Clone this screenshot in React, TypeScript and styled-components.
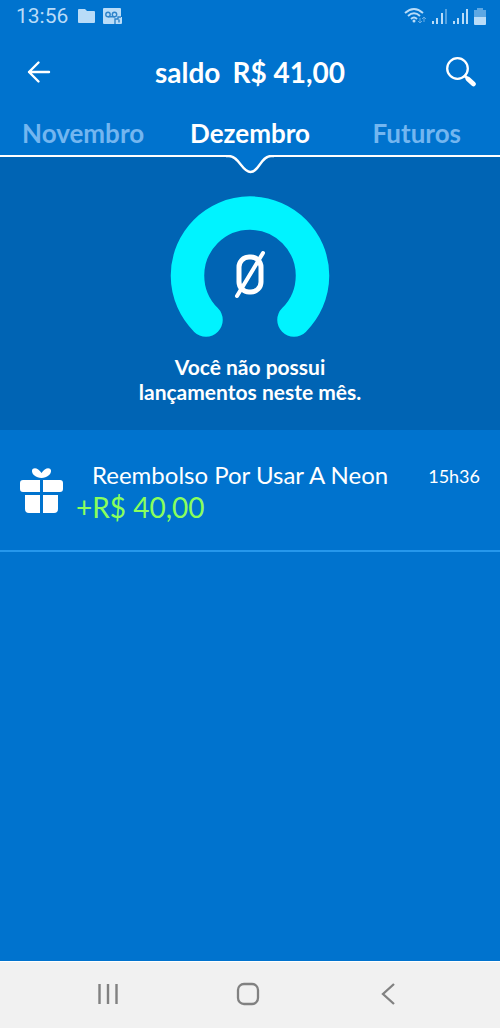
import React from "react";
import styled, { createGlobalStyle } from "styled-components";

const Global = createGlobalStyle`
  * { box-sizing: border-box; }
  html, body { margin: 0; background: #0073ce; }
  body { font-family: Lato, "Liberation Sans", sans-serif; color: #fff; }
  button { border: 0; padding: 0; background: none; color: inherit; font: inherit; cursor: pointer; }
  h1, h2, p { margin: 0; }
  svg { display: block; }
`;

const Screen = styled.div`
  display: flex;
  flex-direction: column;
  min-height: 100vh;
`;

const StatusBar = styled.div`
  display: flex;
  align-items: center;
  justify-content: space-between;
  height: 32px;
  padding: 0 14px 0 16px;
  color: #b9dcf8;
  font: 21px/32px Roboto, sans-serif;
`;

const StatusGroup = styled.div<{ $gap: number }>`
  display: flex;
  align-items: center;
  gap: ${(p) => p.$gap}px;
`;

const Header = styled.header`
  display: grid;
  grid-template-columns: 40px 1fr 40px;
  align-items: center;
  height: 80px;
  padding: 0 19px;
`;

const IconButton = styled.button`
  display: flex;
  align-items: center;
  justify-content: center;
  width: 40px;
  height: 40px;
`;

const Balance = styled.h1`
  display: flex;
  justify-content: center;
  gap: 12px;
  font-size: 28px;
  line-height: 32px;
  font-weight: 700;
`;

const Months = styled.nav`
  display: grid;
  grid-template-columns: 1fr auto 1fr;
  height: 43px;
  padding-top: 5px;
`;

const Month = styled.button<{ $side?: "left" | "right" }>`
  && {
    height: 32px;
    padding-left: ${(p) => (p.$side === "left" ? 22 : 0)}px;
    padding-right: ${(p) => (p.$side === "right" ? 39 : 0)}px;
    text-align: ${(p) => p.$side ?? "center"};
    font-size: 26px;
    line-height: 32px;
    font-weight: 700;
    color: ${(p) => (p.$side ? "#73b6f0" : "#fff")};
  }
`;

const Summary = styled.section`
  display: flex;
  flex-direction: column;
  align-items: center;
  padding-bottom: 26px;
  background: #0064b4;
`;

const Divider = styled.div`
  display: flex;
  width: 100%;
  height: 20px;
  margin-bottom: 21px;
`;

const DividerLine = styled.div`
  flex: 1;
  height: 2px;
  background: #fff;
`;

const Message = styled.p`
  margin-top: 14px;
  font-size: 21px;
  line-height: 25px;
  font-weight: 700;
  text-align: center;
`;

const Entry = styled.article`
  display: flex;
  align-items: flex-start;
  height: 122px;
  padding: 30px 20px 0;
  border-bottom: 2px solid #2597ec;
`;

const GiftSlot = styled.div`
  padding-top: 7px;
`;

const EntryText = styled.div`
  flex: 1;
  padding-left: 13px;
`;

const EntryTitle = styled.h2`
  padding-left: 16px;
  font-size: 24px;
  line-height: 30px;
  font-weight: 400;
`;

const Amount = styled.p`
  font-size: 28px;
  line-height: 34px;
  color: #8aff5c;
`;

const Time = styled.time`
  font-size: 18px;
  line-height: 32px;
`;

const NavBar = styled.nav`
  display: flex;
  align-items: flex-start;
  justify-content: center;
  gap: 100px;
  height: 67px;
  margin-top: auto;
  padding: 12px 4px 0 0;
  border-top: 1px solid #fff;
  background: #f1f1f1;
  color: #818181;
`;

const Signal = ({ weak }: { weak?: boolean }) => (
  <svg width="16" height="16" viewBox="0 0 16 16" fill="currentColor" aria-hidden="true">
    <rect x="0" y="13" width="2" height="3" />
    <rect x="4" y="10" width="2" height="6" />
    <rect x="9" y="5" width="2" height="11" />
    <rect x="13" y="1" width="2" height="15" opacity={weak ? 0.45 : 1} />
  </svg>
);

export default function App() {
  return (
    <Screen>
      <Global />
      <StatusBar>
        <StatusGroup $gap={9}>
          <span>13:56</span>
          <svg width="46" height="18" viewBox="0 0 46 18" aria-hidden="true">
            <path d="M2 2h6l2 2h7q1 0 1 1v10q0 1-1 1H2q-1 0-1-1V3q0-1 1-1z" fill="currentColor" />
            <path d="M27 1h16q1 0 1 1v8h1v6q0 1-1 1H27q-1 0-1-1V2q0-1 1-1z" fill="currentColor" />
            <g fill="none" stroke="#2e83ca" strokeWidth="1.4">
              <circle cx="31" cy="7.500" r="2.200" />
              <circle cx="37.500" cy="7.500" r="2.200" />
              <path d="M31 9.700h7M38 17v-5h3v-2h3" />
              <path d="M42 12.500v3" />
            </g>
          </svg>
        </StatusGroup>
        <StatusGroup $gap={5}>
          <svg width="23" height="18" viewBox="0 0 23 18" aria-hidden="true">
            <g fill="none" stroke="currentColor" strokeWidth="1.900">
              <path d="M1 6Q10-2 19 6M4 9Q10 3.500 16 9M7 12Q10 9 13 12" />
            </g>
            <circle cx="10" cy="14" r="1.500" fill="currentColor" />
            <path d="M16 11v4m-2-1 2 2 2-2M20 15v-4m-2 1 2-2 2 2" fill="none" stroke="currentColor" opacity=".55" />
          </svg>
          <Signal weak />
          <Signal />
          <svg width="12" height="17" viewBox="0 0 12 17" fill="currentColor" aria-hidden="true">
            <path d="M3 0h6v2h3v7H0V2h3z" opacity=".5" />
            <path d="M0 9h12v7q0 1-1 1H1q-1 0-1-1z" />
          </svg>
        </StatusGroup>
      </StatusBar>

      <Header>
        <IconButton aria-label="Voltar">
          <svg width="24" height="24" viewBox="0 0 24 24" fill="none" stroke="#fff" strokeWidth="2.4" strokeLinecap="round" strokeLinejoin="round">
            <path d="M22 12H2M11.500 2.500 2 12l9.500 9.500" />
          </svg>
        </IconButton>
        <Balance>
          <span>saldo</span>
          <span>R$ 41,00</span>
        </Balance>
        <IconButton aria-label="Buscar">
          <svg width="32" height="32" viewBox="0 0 32 32" fill="none" stroke="#fff" strokeLinecap="round">
            <circle cx="12.500" cy="12.500" r="10.300" strokeWidth="2.300" />
            <path d="M20 20l3 3" strokeWidth="3" />
            <path d="M23 23l5.500 5" strokeWidth="4.800" />
          </svg>
        </IconButton>
      </Header>

      <Months>
        <Month $side="left">Novembro</Month>
        <Month>Dezembro</Month>
        <Month $side="right">Futuros</Month>
      </Months>

      <Summary>
        <Divider>
          <DividerLine />
          <svg width="48" height="20" viewBox="0 0 48 20" aria-hidden="true">
            <path d="M0 0H48V1H45C35 1 33 17 24.500 17S13 1 3 1H0z" fill="#0073ce" />
            <path d="M0 1H3C13 1 16 17 24.500 17S35 1 45 1H48" fill="none" stroke="#fff" strokeWidth="2.300" />
          </svg>
          <DividerLine />
        </Divider>
        <svg width="160" height="144" viewBox="0 0 160 144" fill="none" aria-hidden="true">
          <path d="M36 124A62.500 62.500 0 1 1 124 124" stroke="#00f3ff" strokeWidth="33.500" strokeLinecap="round" />
          <rect x="69" y="61" width="22" height="35" rx="10" stroke="#fff" strokeWidth="5" />
          <path d="M67 100 93 57" stroke="#fff" strokeWidth="4" strokeLinecap="round" />
        </svg>
        <Message>
          Você não possui<br />lançamentos neste mês.
        </Message>
      </Summary>

      <Entry>
        <GiftSlot>
          <svg width="43" height="48" viewBox="0 0 43 48" fill="#fff" aria-hidden="true">
            <path d="M3 13H20V25H3q-3 0-3-3V16q0-3 3-3zM23 13H40q3 0 3 3v6q0 3-3 3H23zM5 28H20V46H9q-4 0-4-4zM23 28H38V42q0 4-4 4H23z" />
            <path d="M21.500 11C16 11 11.500 7 12 3.500C12.500 0 18 0 21.500 6C25 0 30.500 0 31 3.500C31.500 7 27 11 21.500 11z" />
          </svg>
        </GiftSlot>
        <EntryText>
          <EntryTitle>Reembolso Por Usar A Neon</EntryTitle>
          <Amount>+R$ 40,00</Amount>
        </EntryText>
        <Time dateTime="15:36">15h36</Time>
      </Entry>

      <NavBar aria-label="Sistema">
        <IconButton aria-label="Recentes">
          <svg width="22" height="22" viewBox="0 0 22 22" stroke="currentColor" strokeWidth="2.400">
            <path d="M2.500 1v20M11 1v20M19.500 1v20" />
          </svg>
        </IconButton>
        <IconButton aria-label="Início">
          <svg width="24" height="24" viewBox="0 0 24 24" fill="none" stroke="currentColor" strokeWidth="2.300">
            <rect x="2" y="2" width="20" height="20" rx="6" />
          </svg>
        </IconButton>
        <IconButton aria-label="Voltar à tela anterior">
          <svg width="24" height="24" viewBox="0 0 24 24" fill="none" stroke="currentColor" strokeWidth="2.300">
            <path d="M18 2 7 12l11 10" />
          </svg>
        </IconButton>
      </NavBar>
    </Screen>
  );
}
